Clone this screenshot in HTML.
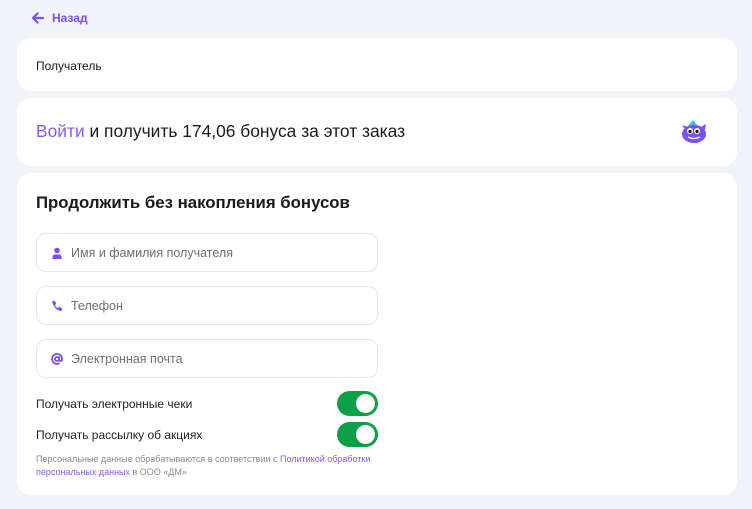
<!DOCTYPE html>
<html><head><meta charset="utf-8"><style>
*{margin:0;padding:0;box-sizing:border-box}
body{width:752px;height:509px;background:#f0f3f8;font-family:"Liberation Sans",sans-serif;position:relative;overflow:hidden;color:#1a1a1a}
.back{position:absolute;left:31px;top:11px;color:#7b4ff0;font-weight:bold;font-size:12px;display:flex;align-items:center;gap:8px}
.card{position:absolute;left:17px;width:720px;background:#fff;border-radius:14px}
.inp{position:absolute;left:36px;width:342px;height:39px;border:1px solid #e4e6ea;border-radius:10px;display:flex;align-items:center;padding-left:14px;font-size:12.5px;color:#6e6e73}
.inp svg{margin-right:8px}
.tg{position:absolute;left:337px;width:41px;height:25px;background:#0b9f47;border-radius:13px}
.tg::after{content:"";position:absolute;right:3px;top:3px;width:19px;height:19px;border-radius:50%;background:#fff}
.lbl{position:absolute;left:36px;font-size:12px;color:#222}
</style></head><body>
<div class="back"><svg width="13" height="12" viewBox="0 0 13 12"><path d="M12 6H2M6.5 1.5L2 6l4.5 4.5" stroke="#7b4ff0" stroke-width="2.2" fill="none" stroke-linecap="round" stroke-linejoin="round"/></svg>Назад</div>
<div class="card" style="top:38px;height:53px"><div style="position:absolute;left:19px;top:21px;font-size:12px">Получатель</div></div>
<div class="card" style="top:98px;height:68px">
<div style="position:absolute;left:19px;top:23px;font-size:17.4px"><span style="color:#8a5cf0">Войти</span> и получить 174,06 бонуса за этот заказ</div>
<svg style="position:absolute;left:660px;top:19px" width="34" height="30" viewBox="0 0 34 30"><path d="M11 9l5-6 4 5z" fill="#2ec8e0"/><path d="M8 12l-3-4 6 2zM24 10l5-3-1 6z" fill="#7b4ff0"/><ellipse cx="17" cy="17" rx="12" ry="9" fill="#7b4ff0"/><circle cx="13" cy="14" r="3" fill="#fff"/><circle cx="20" cy="14" r="3" fill="#fff"/><circle cx="13" cy="14.5" r="1.6" fill="#111"/><circle cx="20" cy="14.5" r="1.6" fill="#111"/><path d="M11 20q6 3 12 0" stroke="#fff" stroke-width="1.3" fill="none"/></svg>
</div>
<div class="card" style="top:173px;height:322px">
<div style="position:absolute;left:19px;top:20px;font-size:16.8px;font-weight:bold">Продолжить без накопления бонусов</div>
</div>
<div class="inp" style="top:233px"><svg width="12" height="12" viewBox="0 0 12 12"><circle cx="6" cy="3.5" r="2.8" fill="#7b4ff0"/><path d="M1.5 12v-2a2.5 2.5 0 0 1 2.5-2.5h4a2.5 2.5 0 0 1 2.5 2.5v2z" fill="#7b4ff0"/></svg>Имя и фамилия получателя</div>
<div class="inp" style="top:286px"><svg width="12" height="12" viewBox="0 0 12 12"><path d="M1 1.5L3.8 .8 5.3 4 3.8 5.2Q5 7.3 6.8 8.2L8 6.7 11.2 8.2 10.5 11Q4 11 1 1.5z" fill="#7b4ff0"/></svg>Телефон</div>
<div class="inp" style="top:339px"><svg width="12" height="12" viewBox="0 0 12 12"><circle cx="6" cy="6" r="2" stroke="#7b4ff0" stroke-width="1.8" fill="none"/><path d="M8 4v2.5q0 1.5 1.5 1.5t1.5-2A5 5 0 1 0 8 10.5" stroke="#7b4ff0" stroke-width="1.8" fill="none" stroke-linecap="round"/></svg>Электронная почта</div>
<div class="lbl" style="top:397px">Получать электронные чеки</div>
<div class="tg" style="top:391px"></div>
<div class="lbl" style="top:428px">Получать рассылку об акциях</div>
<div class="tg" style="top:422px"></div>
<div style="position:absolute;left:36px;top:453px;width:345px;font-size:9px;line-height:13px;color:#8a8a8f">Персональные данные обрабатываются в соответствии с <span style="color:#8a5cf0">Политикой обработки персональных данных</span> в ООО «ДМ»</div>
</body></html>
